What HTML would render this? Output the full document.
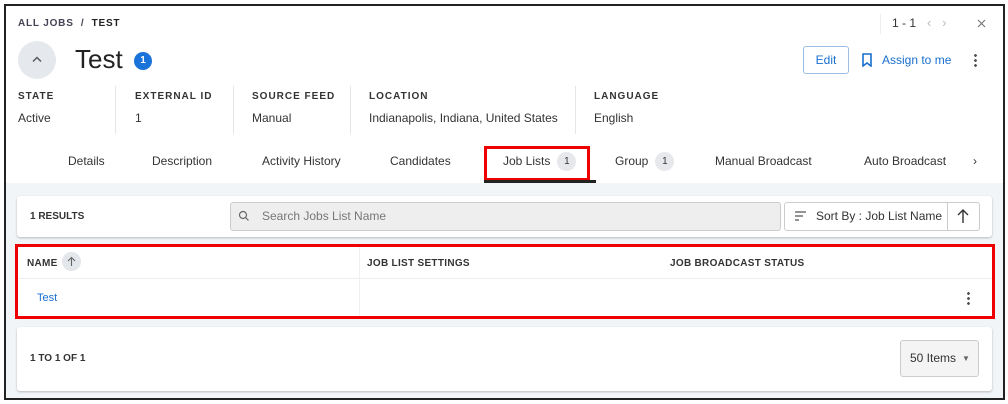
<!DOCTYPE html><html><head><style>
*{box-sizing:border-box;margin:0;padding:0}
body{width:1008px;height:404px;background:#fff;font-family:"Liberation Sans",sans-serif;position:relative;overflow:hidden;color:#222}
.a{position:absolute}
.frame{left:4px;top:4px;width:1001px;height:396px;border:2px solid #222;}
.gray{left:6px;top:183px;width:997px;height:215px;background:#f2f5f8}
.lbl{font-size:10px;font-weight:bold;letter-spacing:1px;color:#333}
.val{font-size:12px;color:#333}
.sep{width:1px;height:48px;background:#e4e6ea;top:86px}
.tab{font-size:12px;color:#333;top:154px}
.btab{font-size:12px;color:#333;top:150px;display:flex;align-items:center;height:22px}
.badge{display:inline-block;width:19px;height:19px;border-radius:50%;background:#e6e8eb;font-size:10px;text-align:center;line-height:19px;color:#333;margin-left:7px}
.card{background:#fff;border-radius:3px;box-shadow:0 1px 2px rgba(0,0,0,.25)}
.th{font-size:10px;font-weight:bold;color:#333;top:258px;letter-spacing:.3px}
</style></head><body>
<div class="a gray"></div>
<div class="a frame"></div>
<div class="a" style="left:18px;top:18px;font-size:10px;font-weight:bold;letter-spacing:.8px;color:#445">ALL JOBS &nbsp;/&nbsp; <span style="color:#222">TEST</span></div>
<div class="a" style="left:880px;top:14px;width:1px;height:20px;background:#eee"></div>
<div class="a" style="left:892px;top:16px;font-size:12px;color:#333">1 - 1</div>
<div class="a" style="left:927px;top:15px;font-size:13px;color:#bbb">&#8249;&nbsp;&nbsp;&nbsp;&#8250;</div>
<svg class="a" style="left:977px;top:19px" width="9" height="9"><path d="M1 1l7 7M8 1l-7 7" stroke="#777" stroke-width="1.2"/></svg>
<div class="a" style="left:18px;top:41px;width:38px;height:38px;border-radius:50%;background:#e5e8ec"></div>
<svg class="a" style="left:32px;top:56px" width="10" height="7"><path d="M1 5.5l4-4 4 4" fill="none" stroke="#555" stroke-width="1.4"/></svg>
<div class="a" style="left:75px;top:44px;font-size:26px;color:#222">Test</div>
<div class="a" style="left:134px;top:52px;width:18px;height:18px;border-radius:50%;background:#1a73d9;color:#fff;font-size:10px;font-weight:bold;text-align:center;line-height:18px">1</div>
<div class="a" style="left:803px;top:46px;width:46px;height:28px;border:1px solid #9dbfe6;border-radius:3px;font-size:12px;color:#1a6fce;text-align:center;line-height:26px">Edit</div>
<svg class="a" style="left:861px;top:53px" width="12" height="14" viewBox="0 0 12 14"><path d="M2 1h8v12l-4-3-4 3z" fill="none" stroke="#1a6fce" stroke-width="1.6"/></svg>
<div class="a" style="left:882px;top:53px;font-size:12px;color:#1a6fce">Assign to me</div>
<div class="a" style="left:974px;top:53px;width:3px;height:14px;background:radial-gradient(circle,#555 1.3px,transparent 1.5px) 0 0/3px 5px"></div>
<div class="a lbl" style="left:18px;top:91px">STATE</div><div class="a val" style="left:18px;top:111px">Active</div>
<div class="a sep" style="left:115px"></div>
<div class="a lbl" style="left:135px;top:91px">EXTERNAL ID</div><div class="a val" style="left:135px;top:111px">1</div>
<div class="a sep" style="left:233px"></div>
<div class="a lbl" style="left:252px;top:91px">SOURCE FEED</div><div class="a val" style="left:252px;top:111px">Manual</div>
<div class="a sep" style="left:350px"></div>
<div class="a lbl" style="left:369px;top:91px">LOCATION</div><div class="a val" style="left:369px;top:111px">Indianapolis, Indiana, United States</div>
<div class="a sep" style="left:575px"></div>
<div class="a lbl" style="left:594px;top:91px">LANGUAGE</div><div class="a val" style="left:594px;top:111px">English</div>
<div class="a tab" style="left:68px">Details</div>
<div class="a tab" style="left:152px">Description</div>
<div class="a tab" style="left:262px">Activity History</div>
<div class="a tab" style="left:390px">Candidates</div>
<div class="a" style="left:484px;top:146px;width:106px;height:35px;border:3px solid #e00"></div>
<div class="a" style="left:484px;top:180px;width:112px;height:3px;background:#222"></div>
<div class="a btab" style="left:503px">Job Lists<span class="badge">1</span></div>
<div class="a btab" style="left:615px">Group<span class="badge">1</span></div>
<div class="a tab" style="left:715px">Manual Broadcast</div>
<div class="a tab" style="left:864px">Auto Broadcast</div>
<div class="a tab" style="left:973px">&#8250;</div>
<div class="a card" style="left:17px;top:196px;width:975px;height:41px"></div>
<div class="a" style="left:30px;top:211px;font-size:10px;font-weight:bold;color:#333">1 RESULTS</div>
<div class="a" style="left:230px;top:202px;width:551px;height:29px;background:#eee;border:1px solid #ccc;border-radius:3px"></div>
<svg class="a" style="left:238px;top:210px" width="12" height="12"><circle cx="5" cy="5" r="3.5" fill="none" stroke="#666" stroke-width="1.2"/><path d="M7.5 7.5l3 3" stroke="#666" stroke-width="1.2"/></svg>
<div class="a" style="left:262px;top:209px;font-size:12px;color:#777">Search Jobs List Name</div>
<div class="a" style="left:784px;top:202px;width:196px;height:29px;border:1px solid #ccc;border-radius:3px;background:#fff"></div>
<div class="a" style="left:947px;top:202px;width:1px;height:29px;background:#ccc"></div>
<svg class="a" style="left:795px;top:211px" width="12" height="10"><path d="M0 1h11M0 5h8M0 9h4" stroke="#555" stroke-width="1.3"/></svg>
<div class="a" style="left:816px;top:209px;font-size:12px;color:#333">Sort By : Job List Name</div>
<svg class="a" style="left:957px;top:208px" width="12" height="16"><path d="M6 15V2M1 7l5-5 5 5" fill="none" stroke="#333" stroke-width="1.4"/></svg>
<div class="a" style="left:15px;top:244px;width:980px;height:75px;border:3px solid #e00;background:#fff"></div>
<div class="a" style="left:18px;top:278px;width:974px;height:1px;background:#eee"></div>
<div class="a" style="left:359px;top:247px;width:1px;height:69px;background:#f0f0f0"></div>
<div class="a th" style="left:27px">NAME</div>
<div class="a" style="left:62px;top:252px;width:19px;height:19px;border-radius:50%;background:#e3e6ea"></div>
<svg class="a" style="left:67px;top:256px" width="9" height="11"><path d="M4.5 10V1.5M1 5l3.5-3.5L8 5" fill="none" stroke="#666" stroke-width="1.1"/></svg>
<div class="a th" style="left:367px">JOB LIST SETTINGS</div>
<div class="a th" style="left:670px">JOB BROADCAST STATUS</div>
<div class="a" style="left:37px;top:292px;font-size:11px;color:#1a6fce">Test</div>
<div class="a" style="left:967px;top:291px;width:3px;height:14px;background:radial-gradient(circle,#555 1.3px,transparent 1.5px) 0 0/3px 5px"></div>
<div class="a card" style="left:17px;top:327px;width:975px;height:64px"></div>
<div class="a" style="left:30px;top:353px;font-size:10px;font-weight:bold;color:#333">1 TO 1 OF 1</div>
<div class="a" style="left:900px;top:340px;width:79px;height:37px;border:1px solid #ccc;border-radius:3px;background:#f4f4f4;font-size:12px;color:#333;line-height:35px;padding-left:9px">50 Items<span style="font-size:8px;color:#666;margin-left:6px;vertical-align:1px">&#9660;</span></div>
</body></html>
